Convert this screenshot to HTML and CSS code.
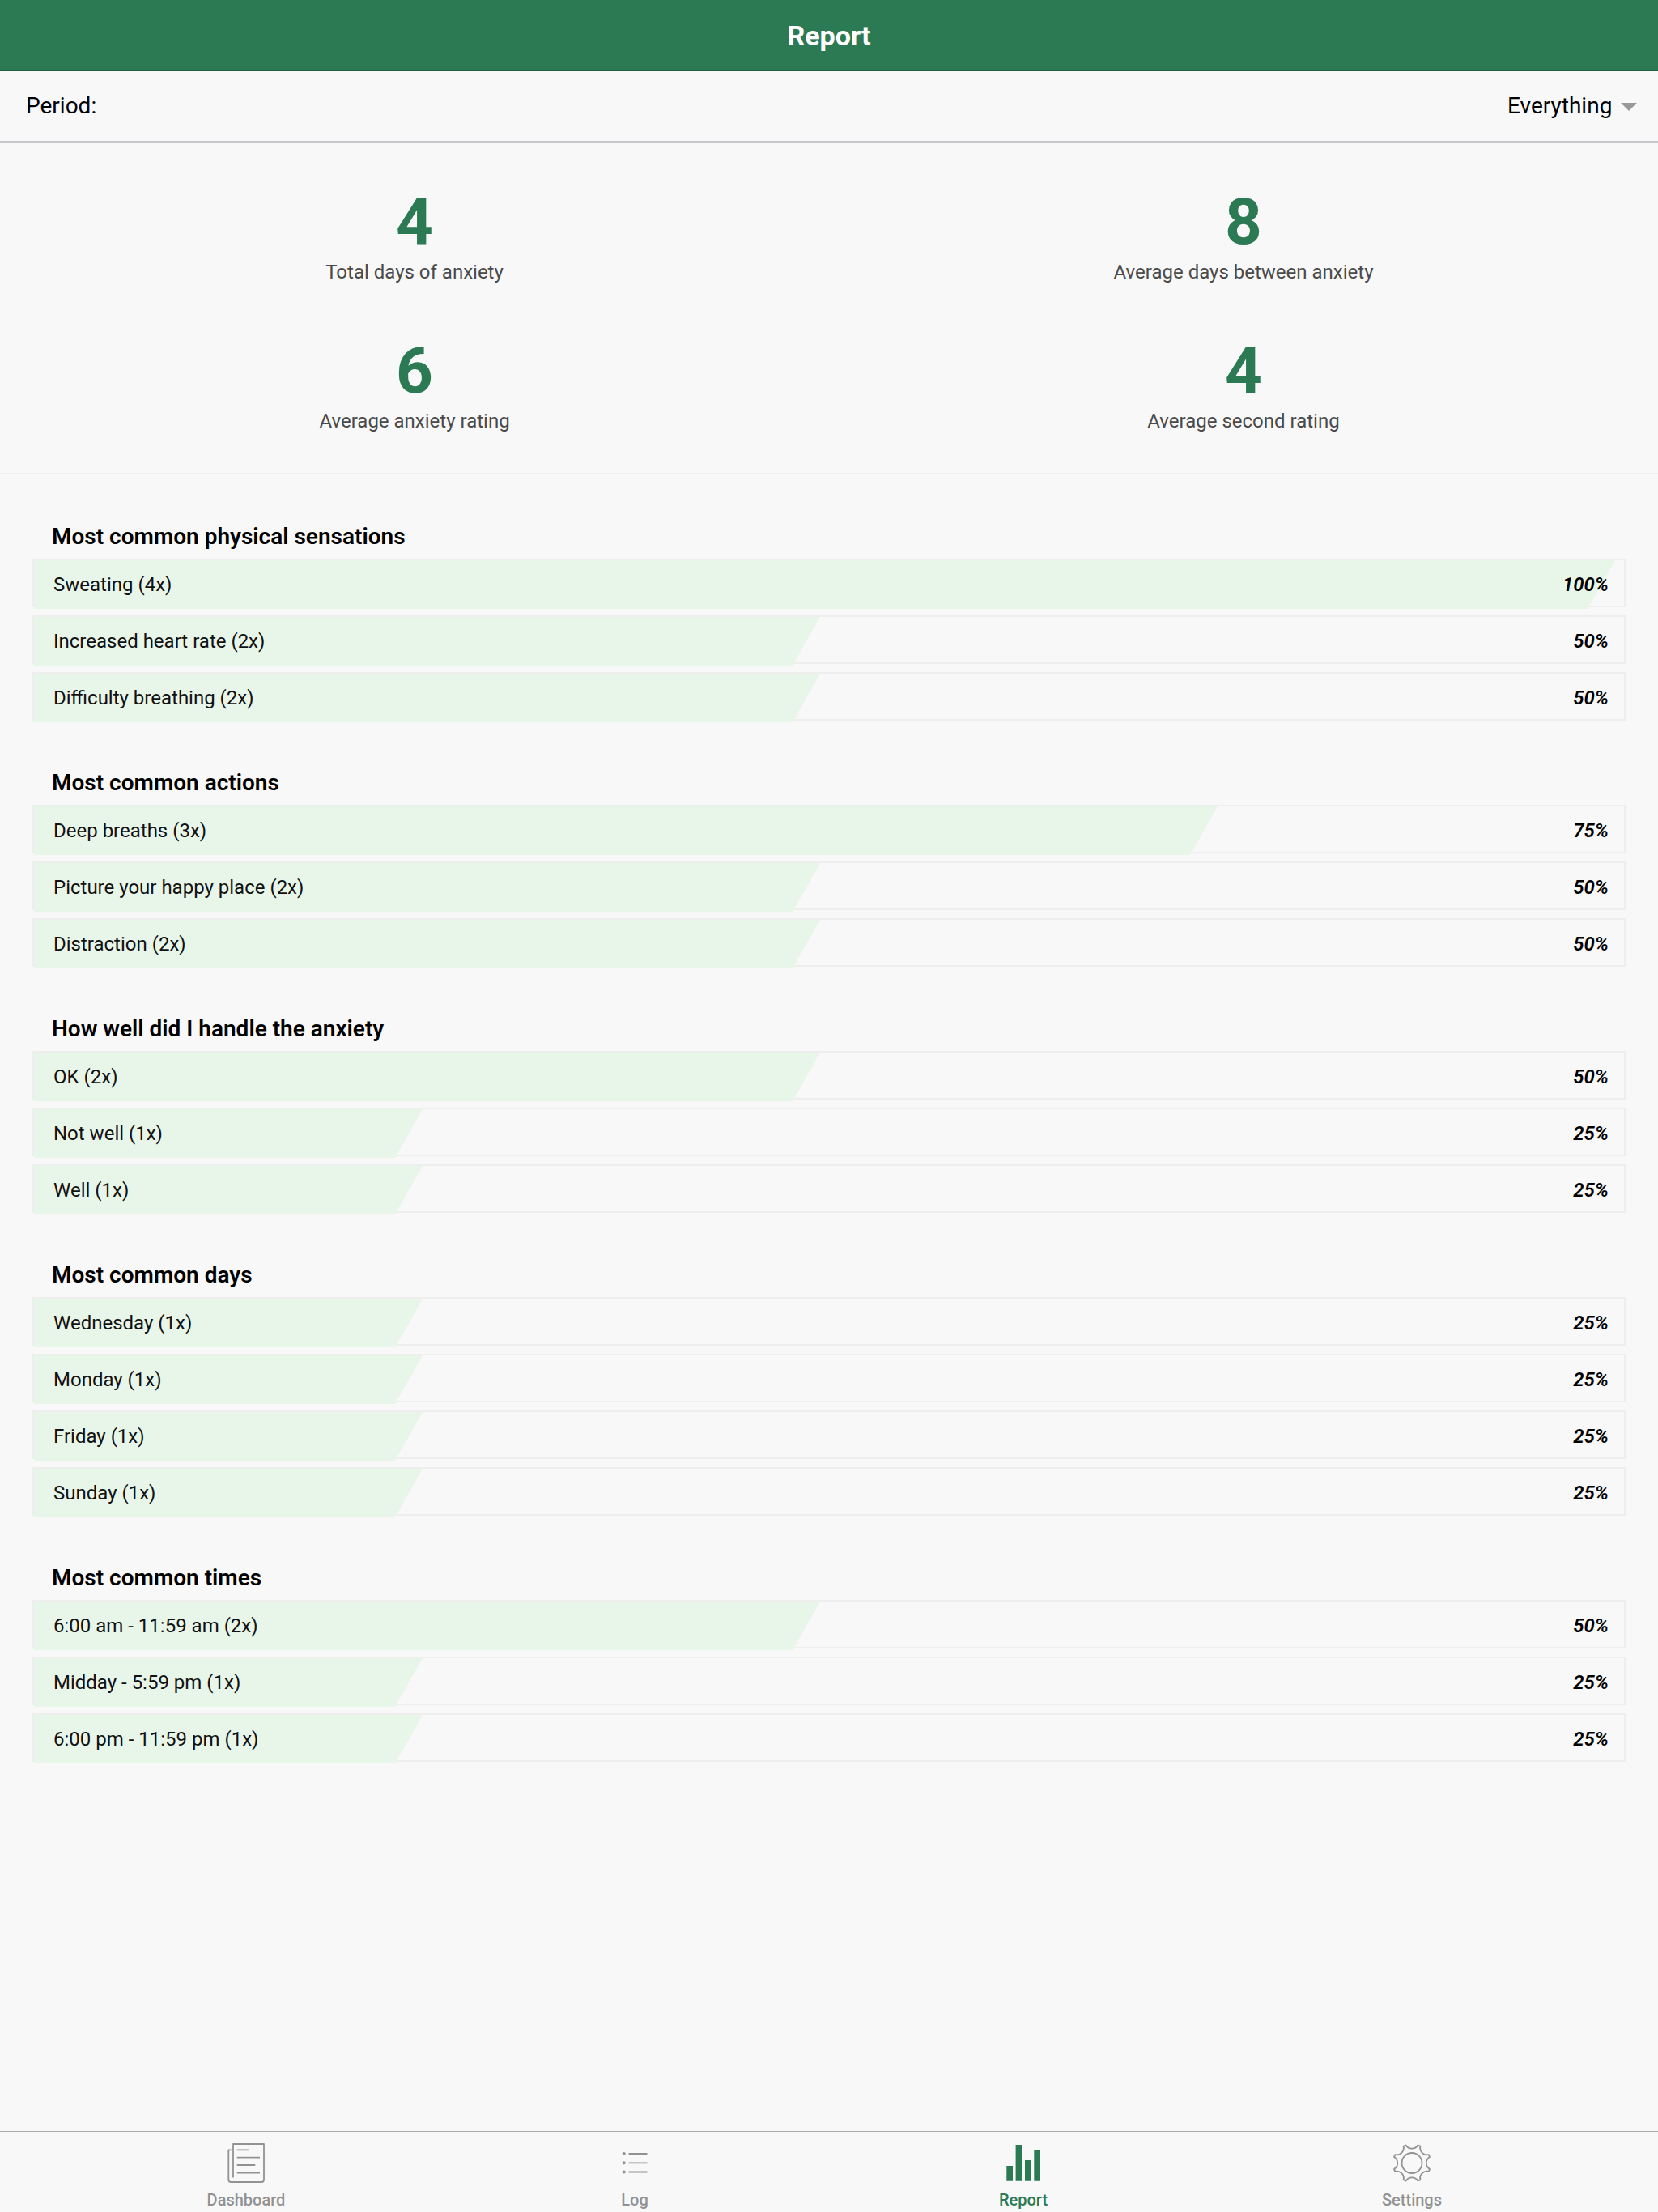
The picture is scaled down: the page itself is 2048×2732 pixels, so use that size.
FILE: index.html
```html
<!DOCTYPE html>
<html lang="en">

<head>
    <meta charset="UTF-8">
    <meta name="viewport" content="width=device-width, initial-scale=1.0">
    <title>Report</title>
    <link rel="stylesheet" href="styles.css">
</head>

<body>
    <header class="header">
        <h1 class="title">Report</h1>
    </header>

    <div class="period">
        <label for="period">Period:</label>
        <div class="period-picker">
            <select id="period" class="period-select">
                <option>Everything</option>
            </select>
            <svg class="arrow" viewBox="0 0 20 10"><path d="M0 0h20L10 10z" /></svg>
        </div>
    </div>

    <main>
        <section class="stats">
            <div class="stat">
                <div class="stat-value">4</div>
                <div class="stat-label">Total days of anxiety</div>
            </div>
            <div class="stat">
                <div class="stat-value">8</div>
                <div class="stat-label">Average days between anxiety</div>
            </div>
            <div class="stat">
                <div class="stat-value">6</div>
                <div class="stat-label">Average anxiety rating</div>
            </div>
            <div class="stat">
                <div class="stat-value">4</div>
                <div class="stat-label">Average second rating</div>
            </div>
        </section>

        <div class="groups">
            <section class="group">
                <h2>Most common physical sensations</h2>
                <ul>
                    <li><div class="fill" style="--value: 100%"></div><div class="text"><span>Sweating (4x)</span><em>100%</em></div></li>
                    <li><div class="fill" style="--value: 50%"></div><div class="text"><span>Increased heart rate (2x)</span><em>50%</em></div></li>
                    <li><div class="fill" style="--value: 50%"></div><div class="text"><span>Difficulty breathing (2x)</span><em>50%</em></div></li>
                </ul>
            </section>

            <section class="group">
                <h2>Most common actions</h2>
                <ul>
                    <li><div class="fill" style="--value: 75%"></div><div class="text"><span>Deep breaths (3x)</span><em>75%</em></div></li>
                    <li><div class="fill" style="--value: 50%"></div><div class="text"><span>Picture your happy place (2x)</span><em>50%</em></div></li>
                    <li><div class="fill" style="--value: 50%"></div><div class="text"><span>Distraction (2x)</span><em>50%</em></div></li>
                </ul>
            </section>

            <section class="group">
                <h2>How well did I handle the anxiety</h2>
                <ul>
                    <li><div class="fill" style="--value: 50%"></div><div class="text"><span>OK (2x)</span><em>50%</em></div></li>
                    <li><div class="fill" style="--value: 25%"></div><div class="text"><span>Not well (1x)</span><em>25%</em></div></li>
                    <li><div class="fill" style="--value: 25%"></div><div class="text"><span>Well (1x)</span><em>25%</em></div></li>
                </ul>
            </section>

            <section class="group">
                <h2>Most common days</h2>
                <ul>
                    <li><div class="fill" style="--value: 25%"></div><div class="text"><span>Wednesday (1x)</span><em>25%</em></div></li>
                    <li><div class="fill" style="--value: 25%"></div><div class="text"><span>Monday (1x)</span><em>25%</em></div></li>
                    <li><div class="fill" style="--value: 25%"></div><div class="text"><span>Friday (1x)</span><em>25%</em></div></li>
                    <li><div class="fill" style="--value: 25%"></div><div class="text"><span>Sunday (1x)</span><em>25%</em></div></li>
                </ul>
            </section>

            <section class="group">
                <h2>Most common times</h2>
                <ul>
                    <li><div class="fill" style="--value: 50%"></div><div class="text"><span>6:00 am - 11:59 am (2x)</span><em>50%</em></div></li>
                    <li><div class="fill" style="--value: 25%"></div><div class="text"><span>Midday - 5:59 pm (1x)</span><em>25%</em></div></li>
                    <li><div class="fill" style="--value: 25%"></div><div class="text"><span>6:00 pm - 11:59 pm (1x)</span><em>25%</em></div></li>
                </ul>
            </section>
        </div>
    </main>

    <nav class="tabs">
        <a class="tab" href="#dashboard">
            <svg class="icon line" viewBox="0 0 52 52">
                <path d="M10 43.5V2h38v44a3 3 0 0 1-3 3H7.3a3 3 0 0 1-3-3V9.300H7.700" />
                <path d="M14.7 9.3H30M14.7 18.7H43M14.7 28H37.3M14.7 37.7H43" />
            </svg>
            Dashboard
        </a>
        <a class="tab" href="#log">
            <svg class="icon line" viewBox="0 0 52 52">
                <path d="M18.5 14h23M18.5 25.3h23M18.5 36.5h23" />
                <g class="solid">
                    <circle cx="12.7" cy="14" r="2.1" />
                    <circle cx="12.7" cy="25.3" r="2.1" />
                    <circle cx="12.7" cy="36.5" r="2.1" />
                </g>
            </svg>
            Log
        </a>
        <a class="tab active" href="#report">
            <svg class="icon solid" viewBox="0 0 52 52">
                <path d="M5.3 29H13v18.7H5.3zM16.6 3h7.8v44.7h-7.8zM28 22h7.7v25.7H28zM39.3 10H47v37.7h-7.7z" />
            </svg>
            Report
        </a>
        <a class="tab" href="#settings">
            <svg class="icon line" viewBox="0 0 52 52">
                <path d="M18.6 3.5A8.6 8.6 0 0 0 33.4 3.5L36.4 4.7A8.6 8.6 0 0 0 46.8 15.1L48 18.1A8.6 8.6 0 0 0 48 32.9L46.8 35.9A8.6 8.6 0 0 0 36.4 46.3L33.4 47.5A8.6 8.6 0 0 0 18.6 47.5L15.6 46.3A8.6 8.6 0 0 0 5.2 35.9L4 32.9A8.6 8.6 0 0 0 4 18.1L5.2 15.1A8.6 8.6 0 0 0 15.6 4.7Z" />
                <circle cx="26" cy="25.5" r="12.5" />
            </svg>
            Settings
        </a>
    </nav>
</body>

</html>
```
FILE: styles.css
```css
* {
    box-sizing: border-box;
}

body {
    font-family: Roboto, sans-serif;
    font-size: 24px;
    background-color: #f8f8f8;
    color: #000;
    margin: 0;
    min-height: 100vh;
    display: flex;
    flex-direction: column;
}

.header {
    height: 88px;
    display: flex;
    justify-content: center;
    align-items: center;
    background-color: #2b7a53;
    border-bottom: 1px solid #226142;
}

.title {
    margin: 0;
    font-size: 34px;
    font-weight: 700;
    color: #fff;
}

/* Period picker */
.period {
    height: 88px;
    padding: 0 26px 2px 32px;
    display: flex;
    justify-content: space-between;
    align-items: center;
    font-size: 28px;
    border-bottom: 2px solid #c8c7cc;
}

.period-picker {
    display: flex;
    align-items: center;
    gap: 10px;
}

.period-select {
    appearance: none;
    padding: 0;
    border: none;
    background: none;
    color: inherit;
    font: inherit;
}

.arrow {
    width: 20px;
    height: 10px;
    margin-top: 4px;
    fill: #999;
}

/* Totals */
.stats {
    display: grid;
    grid-template-columns: 1fr 1fr;
    row-gap: 66px;
    padding: 58px 0 48px;
    text-align: center;
    border-bottom: 2px solid #eee;
}

.stat-value {
    font-size: 80px;
    line-height: 80px;
    font-weight: 700;
    color: #2b7a53;
}

.stat-label {
    margin-top: 6px;
    line-height: 32px;
    color: #4a4a4a;
}

/* Bars */
.groups {
    padding: 60px 40px;
    display: flex;
    flex-direction: column;
    gap: 60px;
}

.group h2 {
    margin: 0 0 10px;
    padding-left: 24px;
    font-size: 28px;
    line-height: 34px;
    font-weight: 600;
}

.group ul {
    list-style: none;
    margin: 0;
    padding: 0;
    display: flex;
    flex-direction: column;
    gap: 10px;
}

.group li {
    display: grid;
    grid-template-rows: 56px;
    border: 2px solid #eee;
}

.fill,
.text {
    grid-area: 1 / 1;
}

/* the fill is as tall as the whole row, so it covers the bottom border */
.fill {
    width: calc(var(--value) - 11px);
    height: 60px;
    background-color: #e8f5e9;
    clip-path: polygon(0 0, 100% 0, calc(100% - 34px) 100%, 0 100%);
}

.text {
    z-index: 1;
    display: flex;
    justify-content: space-between;
    align-items: center;
    padding: 4px 19px 0 24px;
    color: #111;
}

.text em {
    font-weight: 600;
    color: #000;
}

/* Tab bar */
.tabs {
    margin-top: auto;
    height: 100px;
    padding: 13px 64px 0;
    display: flex;
    border-top: 1px solid #a9a9a9;
}

.tab {
    flex: 1;
    display: flex;
    flex-direction: column;
    align-items: center;
    gap: 7px;
    font-size: 20px;
    line-height: 24px;
    font-weight: 500;
    color: #929292;
    text-decoration: none;
}

.tab.active {
    color: #2b7a53;
}

.icon {
    width: 52px;
    height: 52px;
}

.line {
    fill: none;
    stroke: currentColor;
    stroke-width: 1.8;
    stroke-linejoin: round;
}

.solid {
    fill: currentColor;
    stroke: none;
}
```
